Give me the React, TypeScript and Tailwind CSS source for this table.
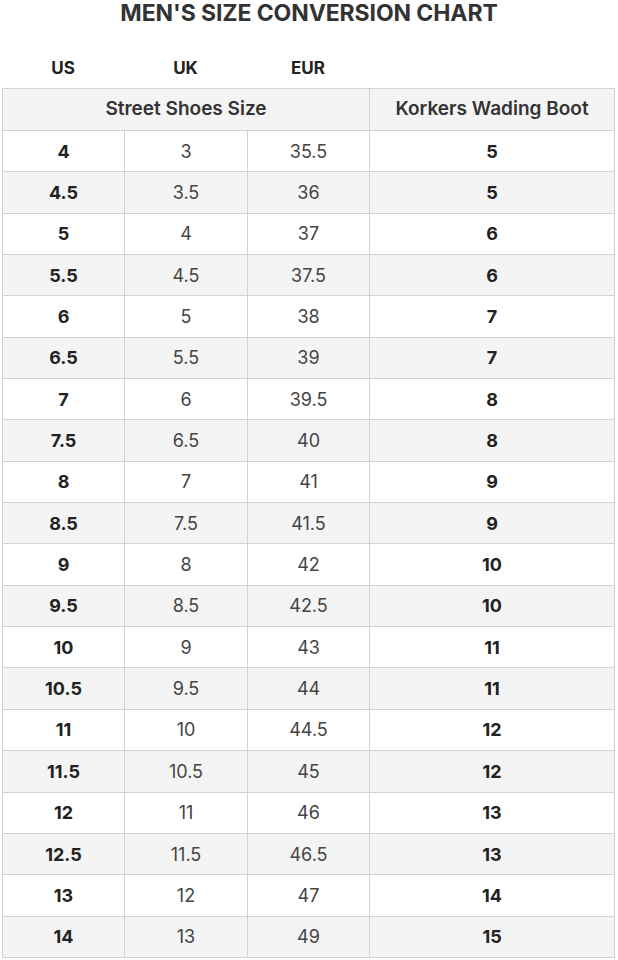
const rows = [
  ['4', '3', '35.5', '5'],
  ['4.5', '3.5', '36', '5'],
  ['5', '4', '37', '6'],
  ['5.5', '4.5', '37.5', '6'],
  ['6', '5', '38', '7'],
  ['6.5', '5.5', '39', '7'],
  ['7', '6', '39.5', '8'],
  ['7.5', '6.5', '40', '8'],
  ['8', '7', '41', '9'],
  ['8.5', '7.5', '41.5', '9'],
  ['9', '8', '42', '10'],
  ['9.5', '8.5', '42.5', '10'],
  ['10', '9', '43', '11'],
  ['10.5', '9.5', '44', '11'],
  ['11', '10', '44.5', '12'],
  ['11.5', '10.5', '45', '12'],
  ['12', '11', '46', '13'],
  ['12.5', '11.5', '46.5', '13'],
  ['13', '12', '47', '14'],
  ['14', '13', '49', '15'],
]

export default function App() {
  return (
    <div className="w-[618px] h-[960px] bg-white text-[#2b2b2b] overflow-hidden" style={{ fontFamily: 'Inter, "Noto Sans", sans-serif' }}>
      <h1 className="h-[26px] text-center text-[23px] leading-[26px] font-bold tracking-[-0.1px] text-[#333]">
        MEN&apos;S SIZE CONVERSION CHART
      </h1>

      <div className="flex h-[62px] pt-[32px] pl-[2px] text-[17px] font-bold leading-[20px] text-[#222]">
        <div className="w-[122px] text-center">US</div>
        <div className="w-[123px] text-center">UK</div>
        <div className="w-[122px] text-center">EUR</div>
      </div>

      <table className="ml-[2px] w-[612px] border-collapse table-fixed text-[18px]">
        <colgroup>
          <col className="w-[122px]" />
          <col className="w-[123px]" />
          <col className="w-[122px]" />
          <col className="w-[245px]" />
        </colgroup>
        <thead>
          <tr className="h-[42px] bg-[#f4f4f4]">
            <th colSpan={3} className="border border-[#d2d2d2] text-center text-[19px] font-semibold text-[#333]">
              Street Shoes Size
            </th>
            <th className="border border-[#d2d2d2] text-center text-[19px] font-semibold text-[#333]">
              Korkers Wading Boot
            </th>
          </tr>
        </thead>
        <tbody>
          {rows.map((r, i) => (
            <tr key={i} className={i % 2 === 0 ? 'h-[41.35px] bg-white' : 'h-[41.35px] bg-[#f4f4f4]'}>
              <td className="border border-[#d2d2d2] text-center font-bold text-[#222]">{r[0]}</td>
              <td className="border border-[#d2d2d2] text-center text-[#444]">{r[1]}</td>
              <td className="border border-[#d2d2d2] text-center text-[#444]">{r[2]}</td>
              <td className="border border-[#d2d2d2] text-center font-bold text-[#222]">{r[3]}</td>
            </tr>
          ))}
        </tbody>
      </table>
    </div>
  )
}
